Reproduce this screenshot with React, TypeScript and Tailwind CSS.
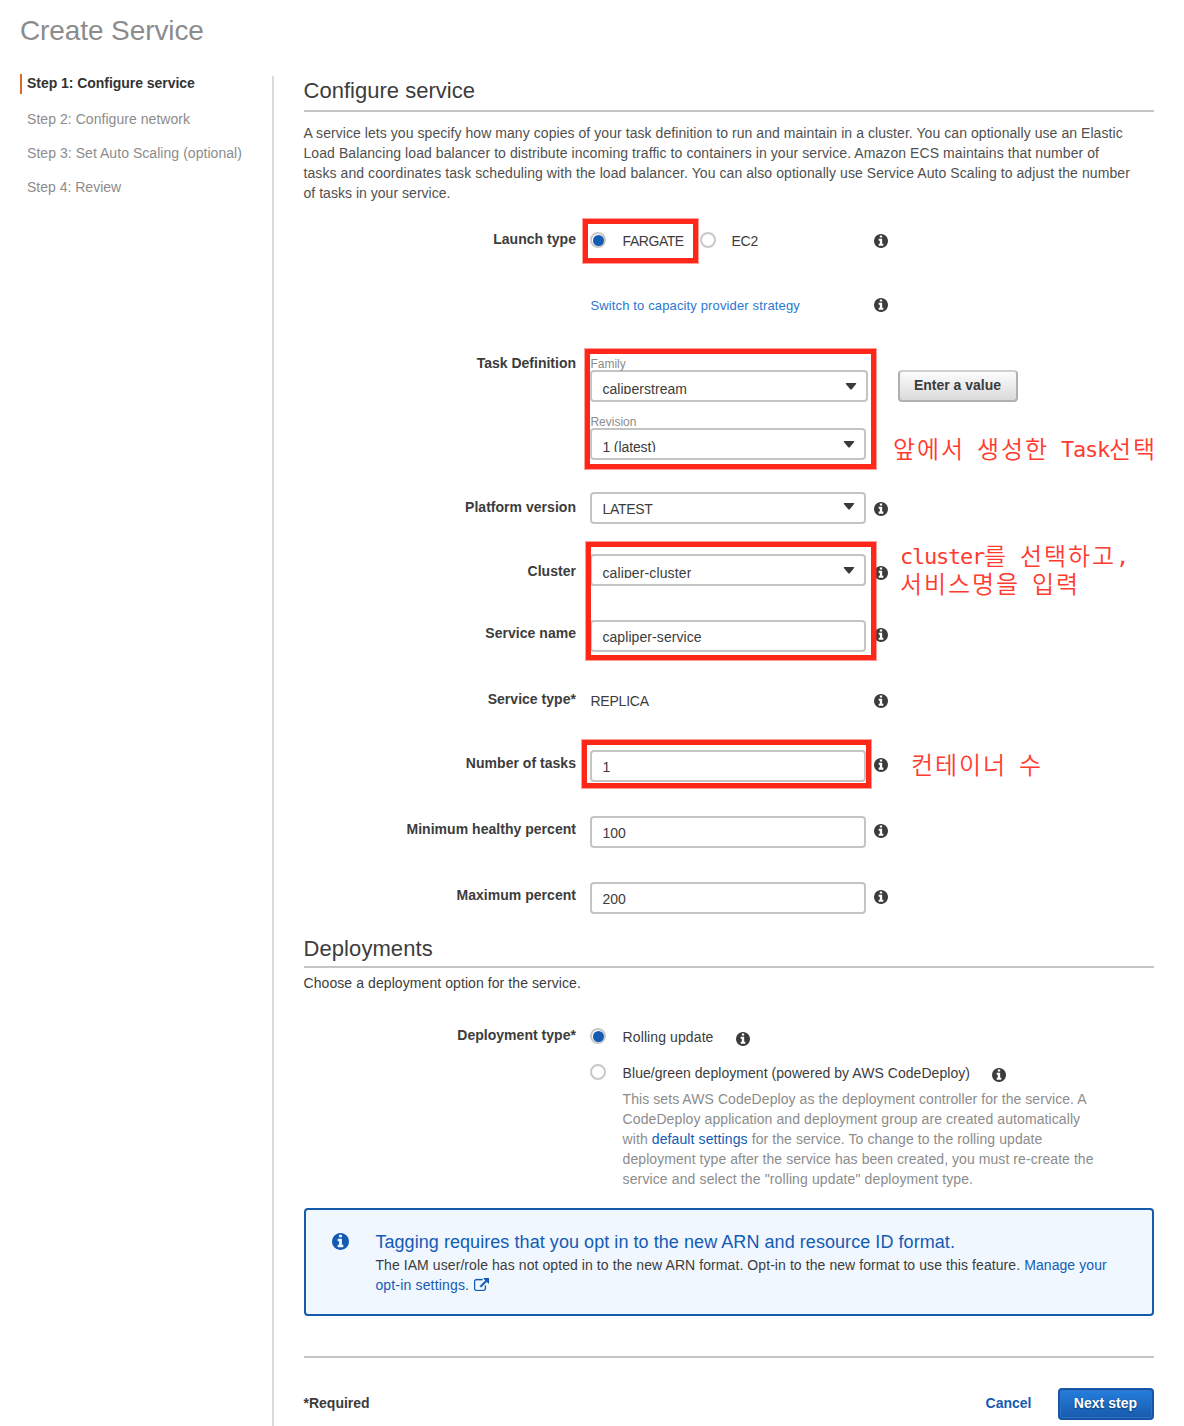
import React from "react";

const INFO =
  "M1152 1376v-160q0-14-9-23t-23-9h-96v-512q0-14-9-23t-23-9h-320q-14 0-23 9t-9 23v160q0 14 9 23t23 9h96v320h-96q-14 0-23 9t-9 23v160q0 14 9 23t23 9h448q14 0 23-9t9-23zm-128-896v-160q0-14-9-23t-23-9h-192q-14 0-23 9t-9 23v160q0 14 9 23t23 9h192q14 0 23-9t9-23zm640 416q0 209-103 385.5t-279.5 279.5-385.5 103-385.5-103-279.5-279.5-103-385.5 103-385.5 279.5-279.5 385.5-103 385.5 103 279.5 279.5 103 385.5z";
const EXTERNAL =
  "M1408 928v320q0 119-84.5 203.5t-203.5 84.5h-832q-119 0-203.5-84.5t-84.5-203.5v-832q0-119 84.5-203.5t203.5-84.5h704q14 0 23 9t9 23v64q0 14-9 23t-23 9h-704q-66 0-113 47t-47 113v832q0 66 47 113t113 47h832q66 0 113-47t47-113v-320q0-14 9-23t23-9h64q14 0 23 9t9 23zm384-864v512q0 26-19 45t-45 19-45-19l-176-176-652 652q-10 10-23 10t-23-10l-114-114q-10-10-10-23t10-23l652-652-176-176q-19-19-19-45t19-45 45-19h512q26 0 45 19t19 45z";

function Info({ className }: { className: string }) {
  return (
    <svg viewBox="128 128 1536 1536" className={`shrink-0 fill-current ${className}`}>
      <path d={INFO} />
    </svg>
  );
}

function Radio({ checked = false }: { checked?: boolean }) {
  return (
    <span className="flex size-4 shrink-0 items-center justify-center rounded-full border-2 border-[#c8c8c8] bg-white">
      {checked && <span className="ml-[1.4px] mt-px size-[11px] shrink-0 rounded-full bg-[#145bb3]" />}
    </span>
  );
}

function Box({ children }: { children: React.ReactNode }) {
  return (
    <div className="h-8 w-[276px] rounded-[4px] border-2 border-[#c4c4c4] bg-white pl-[10.4px] pt-[5px] leading-5 tracking-[0.08px]">
      {children}
    </div>
  );
}

function Select({
  children,
  clipped = false,
  className = "w-[276px]",
}: {
  children: React.ReactNode;
  clipped?: boolean;
  className?: string;
}) {
  return (
    <div
      className={`flex h-8 items-start justify-between rounded-[4px] border-2 border-[#c4c4c4] bg-white pl-[10.4px] pr-[9px] leading-5 ${className}`}
    >
      <div className={clipped ? "h-[22px] overflow-hidden pt-[7px]" : "pt-[5px]"}>{children}</div>
      <svg viewBox="0 0 12 7" className={`h-[7px] w-3 fill-[#3a3a3a] ${clipped ? "mt-[11px]" : "mt-[9px]"}`}>
        <path d="M1.2 0h9.6q.8.2.3 1L6.8 6.2q-.8.8-1.6 0L.9 1q-.5-.8.3-1z" />
      </svg>
    </div>
  );
}

function Row({
  label,
  height,
  offset = "pt-0.5",
  children,
}: {
  label: string;
  height: string;
  offset?: string;
  children: React.ReactNode;
}) {
  return (
    <div className={`flex items-start ${height}`}>
      <div className="mr-[14px] w-[272.5px] shrink-0 pt-[5px] text-right font-bold leading-5 tracking-[0.03px]">{label}</div>
      <div className={`w-[284px] shrink-0 ${offset}`}>{children}</div>
      <Info className="mt-[10px] size-[14px]" />
    </div>
  );
}

function Han({ children }: { children: string }) {
  return <span className="font-['Noto_Sans_CJK_KR',sans-serif] text-[24px] font-[350] tracking-[1.92px]">{children}</span>;
}
function Mono({ children }: { children: string }) {
  return (
    <span className="relative -top-px whitespace-pre font-['DejaVu_Sans_Mono',monospace] text-[22px] leading-none tracking-[-1.24px]">
      {children}
    </span>
  );
}

export default function App() {
  return (
    <div className="relative h-[1426px] w-[1184px] overflow-hidden bg-white font-['Liberation_Sans',sans-serif] text-[14px] tracking-[0.05px] text-[#3c3c3c]">
      <h1 className="ml-5 pt-[13px] text-[28px] leading-9 tracking-[-0.1px] text-[#8c8c8c]">Create Service</h1>

      <div className="mt-[27px] flex items-start">
        <nav className="-mt-1 w-[252px] shrink-0 pl-5 leading-5 text-[#8c8c8c]">
          <div className="mt-0.5 h-5 border-l-2 border-[#d9692a] pl-[5px] font-bold leading-[19px] tracking-[-0.04px] text-[#333]">
            Step 1: Configure service
          </div>
          <div className="ml-[7px] mt-[15px]">Step 2: Configure network</div>
          <div className="ml-[7px] mt-[14px]">Step 3: Set Auto Scaling (optional)</div>
          <div className="ml-[7px] mt-[14px] tracking-normal">Step 4: Review</div>
        </nav>

        <main className="ml-5 h-[1350px] w-[882px] shrink-0 whitespace-nowrap border-l-2 border-[#dadada] pl-[29.5px]">
          <h2 className="h-9 border-b-2 border-[#c4c4c4] text-[22px] leading-[29px] tracking-[0.02px]">Configure service</h2>
          <p className="mt-[11px] leading-5 text-[#505050]">
            <span className="tracking-[0.062px]">A service lets you specify how many copies of your task definition to run and maintain in a cluster. You can optionally use an Elastic</span>
            <br />
            <span className="tracking-[0.078px]">Load Balancing load balancer to distribute incoming traffic to containers in your service. Amazon ECS maintains that number of</span>
            <br />
            <span className="tracking-[0.076px]">tasks and coordinates task scheduling with the load balancer. You can also optionally use Service Auto Scaling to adjust the number</span>
            <br />
            <span className="tracking-[0.03px]">of tasks in your service.</span>
          </p>

          <div className="mt-[21px]">
            <Row label="Launch type" height="h-16" offset="pt-[7px]">
              <div className="flex h-5 items-center leading-5">
                <div className="-mt-0.5"><Radio checked /></div>
                <span className="ml-[16.6px] w-[77.4px] tracking-[-0.45px]">FARGATE</span>
                <div className="-mt-0.5"><Radio /></div>
                <span className="ml-[15.5px] tracking-[-0.2px]">EC2</span>
              </div>
            </Row>
            <Row label="" height="h-[60px]" offset="pt-[7px]">
              <a className="ml-[0.4px] text-[13px] leading-5 tracking-[0.14px] text-[#2b77d1]">Switch to capacity provider strategy</a>
            </Row>
            <div className="flex h-[144px] items-start">
              <div className="mr-[14px] w-[272.5px] pt-[5px] text-right font-bold leading-5 tracking-normal">Task Definition</div>
              <div className="w-[308px] pt-2">
                <div className="h-[14px] pl-[0.4px] text-[12px] leading-4 tracking-normal text-[#8c8c8c]">Family</div>
                <Select clipped className="w-[278px]">caliperstream</Select>
                <div className="mt-3 h-[14px] pl-[0.4px] text-[12px] leading-4 tracking-normal text-[#8c8c8c]">Revision</div>
                <Select clipped><span className="tracking-[-0.1px]">1 (latest)</span></Select>
              </div>
              <button className="mt-[22px] h-8 w-[120px] rounded-[4px] border-2 border-[#b0b0b0] border-t-[#cfcfcf] bg-linear-to-b from-[#fcfcfc] to-[#dadada] pb-0.5 pr-px font-bold leading-none tracking-normal">
                Enter a value
              </button>
            </div>
            <Row label="Platform version" height="h-16" offset="pt-0">
              <Select><span className="tracking-[-0.3px]">LATEST</span></Select>
            </Row>
            <Row label="Cluster" height="h-[62px]" offset="-mt-0.5">
              <Select clipped><span className="tracking-[0.13px]">caliper-cluster</span></Select>
            </Row>
            <Row label="Service name" height="h-[66px]">
              <Box>capliper-service</Box>
            </Row>
            <Row label="Service type*" height="h-16" offset="pt-[7px]">
              <div className="pl-[0.4px] leading-5 tracking-[-0.2px]">REPLICA</div>
            </Row>
            <Row label="Number of tasks" height="h-[66px]">
              <Box>1</Box>
            </Row>
            <Row label="Minimum healthy percent" height="h-[66px]">
              <Box>100</Box>
            </Row>
            <Row label="Maximum percent" height="h-[54px]">
              <Box>200</Box>
            </Row>
          </div>

          <h2 className="h-[34px] border-b-2 border-[#c4c4c4] text-[22px] leading-[29px] tracking-[0.08px]">Deployments</h2>
          <p className="mt-[5px] leading-5 tracking-[0.08px]">Choose a deployment option for the service.</p>

          <div className="mt-8 flex items-start">
            <div className="mr-[14px] w-[272.5px] text-right font-bold leading-5 tracking-[0.03px]">Deployment type*</div>
            <div>
              <div className="flex h-5 items-start pt-0.5">
                <div className="pt-px"><Radio checked /></div>
                <span className="ml-[16.6px] w-[113.4px] leading-5 tracking-[0.1px]">Rolling update</span>
                <Info className="mt-[5px] size-[14px]" />
              </div>
              <div className="mt-4 flex h-5 items-start pt-0.5">
                <div className="pt-px"><Radio /></div>
                <span className="ml-[16.6px] w-[369.4px] leading-5">Blue/green deployment (powered by AWS CodeDeploy)</span>
                <Info className="mt-[5px] size-[14px]" />
              </div>
              <p className="ml-[32.6px] mt-2 leading-5 tracking-[0.08px] text-[#8c8c8c]">
                <span className="tracking-[0.065px]">This sets AWS CodeDeploy as the deployment controller for the service. A</span>
                <br />
                <span className="tracking-[0.09px]">CodeDeploy application and deployment group are created automatically</span>
                <br />
                with <a className="tracking-[0.11px] text-[#145bb3]">default settings</a> for the service. To change to the rolling update
                <br />
                <span className="tracking-[0.065px]">deployment type after the service has been created, you must re-create the</span>
                <br />
                <span className="tracking-[0.12px]">service and select the "rolling update" deployment type.</span>
              </p>
            </div>
          </div>

          <section className="mt-[19px] flex h-[108px] items-start rounded-[4px] border-2 border-[#145bab] bg-[#f0f7ff] pl-[26.5px] pt-[22px]">
            <Info className="mt-[0.5px] size-[17px] text-[#145bb3]" />
            <div className="-mt-0.5 ml-[26.4px]">
              <h3 className="text-[18px] leading-6 tracking-[0.06px] text-[#145bb3]">
                Tagging requires that you opt in to the new ARN and resource ID format.
              </h3>
              <p className="mt-px leading-5 tracking-[0.08px]">
                The IAM user/role has not opted in to the new ARN format. Opt-in to the new format to use this feature.{" "}
                <a className="text-[#145bb3]">
                  Manage your
                  <br />
                  <span className="tracking-[0.17px]">opt-in settings.</span>
                  <svg viewBox="0 0 1792 1536" className="ml-[5px] inline-block h-[13px] w-[15.2px] fill-current stroke-current stroke-[30] align-[-1px]">
                    <path d={EXTERNAL} />
                  </svg>
                </a>
              </p>
            </div>
          </section>

          <footer className="mt-10 flex h-[70px] items-start border-t-2 border-[#c4c4c4] pt-[30px] font-bold tracking-normal">
            <span className="mt-[5px] leading-5">*Required</span>
            <a className="ml-auto mt-[5px] leading-5 text-[#145bb3]">Cancel</a>
            <button className="ml-[26.5px] h-8 w-24 rounded-[4px] border-2 border-[#1557a5] bg-linear-to-b from-[#267edd] to-[#185bad] pb-0.5 pr-px leading-none tracking-[0.05px] text-white shadow-[inset_0_0_0_1px_#2d72c4] [text-shadow:0_1px_2px_#0b3569]">
              Next step
            </button>
          </footer>
        </main>
      </div>

      {/* Markup drawn over the form */}
      <div className="absolute left-[583px] top-[219px] h-[44px] w-[115px] border-[5px] border-[#ff261a] shadow-[0_0_0_1px_rgb(255_38_26/0.45)]" />
      <div className="absolute left-[585px] top-[349px] h-[120px] w-[291px] border-[5px] border-[#ff261a] shadow-[0_0_0_1px_rgb(255_38_26/0.45)]" />
      <div className="absolute left-[586px] top-[542px] h-[118px] w-[290px] border-[5px] border-[#ff261a] shadow-[0_0_0_1px_rgb(255_38_26/0.45)]" />
      <div className="absolute left-[582px] top-[740px] h-[48px] w-[289px] border-[5px] border-[#ff261a] shadow-[0_0_0_1px_rgb(255_38_26/0.45)]" />
      <div className="absolute left-[893px] top-[434px] whitespace-nowrap leading-7 text-[#ff3b30]">
        <Han>앞에서</Han><Mono> </Mono><Han>생성한</Han><Mono> Task</Mono><Han>선택</Han>
      </div>
      <div className="absolute left-[900px] top-[541px] whitespace-nowrap leading-7 text-[#ff3b30]">
        <div className="h-7"><Mono>cluster</Mono><Han>를</Han><Mono> </Mono><Han>선택하고</Han><Mono>,</Mono></div>
        <div className="h-7"><Han>서비스명을</Han><Mono> </Mono><Han>입력</Han></div>
      </div>
      <div className="absolute left-[911px] top-[750px] whitespace-nowrap leading-7 text-[#ff3b30]">
        <Han>컨테이너</Han><Mono> </Mono><Han>수</Han>
      </div>
    </div>
  );
}
